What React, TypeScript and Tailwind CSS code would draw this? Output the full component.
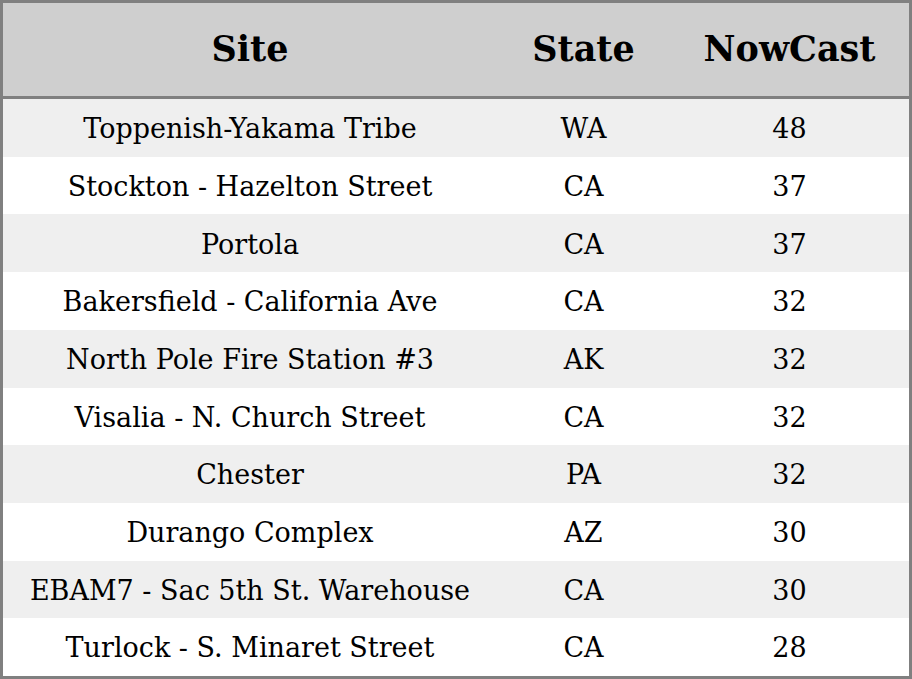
const rows = [
  { site: "Toppenish-Yakama Tribe", state: "WA", nowcast: 48 },
  { site: "Stockton - Hazelton Street", state: "CA", nowcast: 37 },
  { site: "Portola", state: "CA", nowcast: 37 },
  { site: "Bakersfield - California Ave", state: "CA", nowcast: 32 },
  { site: "North Pole Fire Station #3", state: "AK", nowcast: 32 },
  { site: "Visalia - N. Church Street", state: "CA", nowcast: 32 },
  { site: "Chester", state: "PA", nowcast: 32 },
  { site: "Durango Complex", state: "AZ", nowcast: 30 },
  { site: "EBAM7 - Sac 5th St. Warehouse", state: "CA", nowcast: 30 },
  { site: "Turlock - S. Minaret Street", state: "CA", nowcast: 28 },
];

const App = () => {
  return (
    <div className="w-[912px] h-[679px] border-[3px] border-[#808080] bg-white text-black font-['DejaVu_Serif',serif] flex flex-col">
      {/* Header */}
      <div className="grid grid-cols-[494px_173px_1fr] h-[93px] bg-[#cfcfcf] border-b-[3px] border-[#808080] box-content items-center text-center text-[35px] font-bold">
        <div>Site</div>
        <div>State</div>
        <div>NowCast</div>
      </div>

      {/* Rows */}
      <div className="flex-1 flex flex-col">
        {rows.map((r, i) => (
          <div
            key={r.site}
            className={`flex-1 grid grid-cols-[494px_173px_1fr] items-center text-center text-[27px] pt-[3px] ${
              i % 2 === 0 ? "bg-[#efefef]" : "bg-white"
            }`}
          >
            <div>{r.site}</div>
            <div>{r.state}</div>
            <div>{r.nowcast}</div>
          </div>
        ))}
      </div>
    </div>
  );
};

export default App;
